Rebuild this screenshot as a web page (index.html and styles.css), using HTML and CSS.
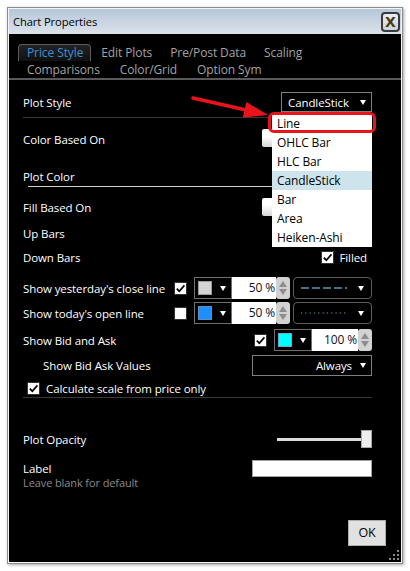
FILE: index.html
```html
<!DOCTYPE html>
<html>
<head>
<meta charset="utf-8">
<link rel="stylesheet" href="styles.css">
</head>
<body>
<div class="window">
  <div class="titlebar">
    <span class="title">Chart Properties</span>
    <span class="close">X</span>
  </div>
  <div class="content">
    <div class="tabs">
      <div class="tabrow">
        <span class="tab active">Price Style</span>
        <span class="tab">Edit Plots</span>
        <span class="tab">Pre/Post Data</span>
        <span class="tab">Scaling</span>
      </div>
      <div class="tabrow">
        <span class="tab">Comparisons</span>
        <span class="tab">Color/Grid</span>
        <span class="tab">Option Sym</span>
      </div>
    </div>

    <div class="form">
      <div class="row r-plotstyle">
        <span class="lbl">Plot Style</span>
        <div class="combo combo-style"><span>CandleStick</span><span class="tri"></span></div>
      </div>
      <div class="sep sep-dark"></div>

      <div class="row r-colorbased">
        <span class="lbl">Color Based On</span>
        <div class="btn-hidden"></div>
      </div>

      <div class="row r-plotcolor">
        <span class="lbl">Plot Color</span>
      </div>
      <div class="sep sep-light"></div>

      <div class="row r-fill">
        <span class="lbl">Fill Based On</span>
        <div class="btn-hidden"></div>
      </div>

      <div class="row r-up">
        <span class="lbl">Up Bars</span>
      </div>

      <div class="row r-down">
        <span class="lbl">Down Bars</span>
        <div class="right filled">
          <span class="chk"><svg width="11" height="11" viewBox="0 0 11 11"><path d="M1.8 5.6 L4.3 8.2 L9.4 2.4" fill="none" stroke="#000" stroke-width="1.7"/></svg></span>
          <span class="filled-txt">Filled</span>
        </div>
      </div>

      <div class="row r-yest">
        <span class="lbl">Show yesterday's close line</span>
        <div class="right group">
          <span class="chk"><svg width="11" height="11" viewBox="0 0 11 11"><path d="M1.8 5.6 L4.3 8.2 L9.4 2.4" fill="none" stroke="#000" stroke-width="1.7"/></svg></span>
          <div class="swatchbox"><span class="swatch sw-gray"></span><span class="tri"></span></div>
          <div class="numbox">50 %</div>
          <div class="spin"><span class="up"></span><span class="dn"></span></div>
          <div class="linecombo">
            <svg width="46" height="4" viewBox="0 0 46 4"><path d="M0 2 H8 M11 2 H19 M22 2 H30 M33 2 H41 M44 2 H46" stroke="#5b97ad" stroke-width="1.3"/></svg>
            <span class="tri"></span>
          </div>
        </div>
      </div>

      <div class="row r-today">
        <span class="lbl">Show today's open line</span>
        <div class="right group">
          <span class="chk"></span>
          <div class="swatchbox"><span class="swatch sw-blue"></span><span class="tri"></span></div>
          <div class="numbox">50 %</div>
          <div class="spin"><span class="up"></span><span class="dn"></span></div>
          <div class="linecombo">
            <svg width="46" height="4" viewBox="0 0 46 4"><path d="M0 2 H46" stroke="#5b97ad" stroke-width="1.2" stroke-dasharray="1.3 3"/></svg>
            <span class="tri"></span>
          </div>
        </div>
      </div>

      <div class="row r-bid">
        <span class="lbl">Show Bid and Ask</span>
        <div class="right group">
          <span class="chk"><svg width="11" height="11" viewBox="0 0 11 11"><path d="M1.8 5.6 L4.3 8.2 L9.4 2.4" fill="none" stroke="#000" stroke-width="1.7"/></svg></span>
          <div class="swatchbox"><span class="swatch sw-cyan"></span><span class="tri"></span></div>
          <div class="numbox">100 %</div>
          <div class="spin"><span class="up"></span><span class="dn"></span></div>
        </div>
      </div>

      <div class="row r-values">
        <span class="lbl indent">Show Bid Ask Values</span>
        <div class="combo combo-always"><span>Always</span><span class="tri"></span></div>
      </div>

      <div class="row r-calc">
        <span class="chk"><svg width="11" height="11" viewBox="0 0 11 11"><path d="M1.8 5.6 L4.3 8.2 L9.4 2.4" fill="none" stroke="#000" stroke-width="1.7"/></svg></span>
        <span class="lbl calc-lbl">Calculate scale from price only</span>
      </div>
      <div class="sep sep-dark"></div>

      <div class="row r-opacity">
        <span class="lbl">Plot Opacity</span>
        <div class="slider"><span class="track"></span><span class="thumb"></span></div>
      </div>

      <div class="row r-label">
        <span class="lbl">Label</span>
        <div class="input"></div>
      </div>
      <div class="hint">Leave blank for default</div>
    </div>

    <div class="footer">
      <div class="ok">OK</div>
    </div>

    <svg class="grip" width="10" height="10" viewBox="0 0 10 10">
      <rect x="8" y="0" width="2" height="2" fill="#8a8a8a"/>
      <rect x="4" y="4" width="2" height="2" fill="#8a8a8a"/>
      <rect x="8" y="4" width="2" height="2" fill="#8a8a8a"/>
      <rect x="0" y="8" width="2" height="2" fill="#8a8a8a"/>
      <rect x="4" y="8" width="2" height="2" fill="#8a8a8a"/>
      <rect x="8" y="8" width="2" height="2" fill="#8a8a8a"/>
    </svg>

    <ul class="droplist">
      <li>Line</li>
      <li>OHLC Bar</li>
      <li>HLC Bar</li>
      <li class="hl">CandleStick</li>
      <li>Bar</li>
      <li>Area</li>
      <li>Heiken-Ashi</li>
    </ul>
    <div class="redbox"></div>
    <svg class="arrow" width="90" height="30" viewBox="0 0 90 30">
      <path d="M4 4 L56 15.7" stroke="#e8141c" stroke-width="3.6" stroke-linecap="round"/>
      <polygon points="79,21 57.4,7.9 53.8,23.5" fill="#e8141c"/>
    </svg>
  </div>
</div>
</body>
</html>
```
FILE: styles.css
```css
* { box-sizing: border-box; }
html, body { margin: 0; padding: 0; background: #fff; }
body {
  font-family: "Open Sans", "Noto Sans", sans-serif;
  font-size: 11.5px;
  letter-spacing: -0.1px;
  width: 410px;
  height: 571px;
  overflow: hidden;
}
.window {
  margin: 7px 0 0 7px;
  width: 396px;
  border: 1px solid #8c8c8c;
  padding: 1px;
  background: #f4f4f4;
  box-shadow: 1px 1px 3px rgba(0,0,0,0.35);
}
.titlebar {
  height: 25px;
  background: linear-gradient(#b6c7d9, #dbe2ea);
  display: flex;
  align-items: center;
  justify-content: space-between;
  padding: 0 1px 0 4px;
}
.title { color: #000; font-size: 11.2px; }
.close {
  width: 19px;
  height: 20px;
  border: 2px solid #3a3a3a;
  border-radius: 4px;
  background: linear-gradient(#e9eef3, #c9d3dc);
  font-family: "DejaVu Sans", sans-serif;
  font-weight: bold;
  font-size: 14px;
  line-height: 16px;
  text-align: center;
  color: #4a3b0c;
  margin-top: 1px;
  letter-spacing: 0;
}
.content {
  position: relative;
  height: 528px;
  background: #000;
  color: #fff;
}
.tabs {
  padding: 10px 0 0 9px;
  border-bottom: 2px solid #5a5a5a;
}
.tabrow {
  display: flex;
  height: 17px;
  gap: 1px;
}
.tab {
  display: block;
  height: 17px;
  padding: 0 7px 0 8px;
  border: 1px solid transparent;
  border-bottom: none;
  font-size: 12px;
  line-height: 15px;
  color: #a3a3a3;
  white-space: nowrap;
}
.tab.active {
  color: #3c8fd3;
  border-color: #5c5c5c;
  border-radius: 4px 4px 0 0;
  background: linear-gradient(#222, #111);
}
.tabrow + .tabrow { gap: 3px; }
.form {
  padding: 0 29px 0 14px;
}
.row {
  display: flex;
  align-items: center;
  height: 20px;
  position: relative;
}
.lbl { white-space: nowrap; }
.indent { margin-left: 20px; }
.right { margin-left: auto; display: flex; align-items: center; }
.sep { height: 1px; }
.sep-dark { background: #383838; }
.sep-light { background: #cfcfcf; margin-left: 5px; }

.r-plotstyle { margin-top: 12px; }
.r-plotstyle + .sep { margin-top: 5px; }
.r-colorbased { margin-top: 11px; }
.r-plotcolor { margin-top: 17px; }
.r-fill { margin-top: 10px; }
.r-up { margin-top: 6px; }
.r-down { margin-top: 4px; }
.r-yest { margin-top: 10px; height: 22px; }
.r-today { margin-top: 3px; height: 22px; }
.r-bid { margin-top: 5px; height: 22px; }
.r-values { margin-top: 3px; height: 22px; }
.r-calc { margin-top: 3px; height: 18px; padding-left: 4px; }
.r-calc + .sep { margin-top: 0; }
.r-opacity { margin-top: 31px; }
.r-label { margin-top: 10px; height: 18px; }

.combo {
  margin-left: auto;
  display: flex;
  align-items: center;
  border: 1px solid #7f7f7f;
  background: #000;
  color: #fff;
}
.combo-style {
  width: 91px;
  height: 20px;
  padding: 0 3px 0 6px;
  justify-content: space-between;
}
.combo-always {
  width: 120px;
  height: 21px;
  padding: 0 3px 0 6px;
  justify-content: flex-end;
  gap: 8px;
}
.tri {
  display: inline-block;
  width: 0;
  height: 0;
  border-left: 3.5px solid transparent;
  border-right: 3.5px solid transparent;
  border-top: 5px solid #fff;
  margin-right: 2px;
}
.btn-hidden {
  margin-left: auto;
  width: 110px;
  height: 18px;
  background: linear-gradient(#ffffff 40%, #d6d6d6);
  border-radius: 2px 0 0 2px;
}
.r-colorbased .btn-hidden { margin-top: -2px; }

.chk {
  width: 13px;
  height: 13px;
  background: #fff;
  border: 1px solid #333;
  display: inline-flex;
  align-items: center;
  justify-content: center;
  flex: none;
}
.filled { gap: 5px; margin-right: 5px; }
.group { height: 22px; }
.group .chk { margin-right: 7px; }
.swatchbox {
  width: 38px;
  height: 22px;
  border: 1px solid #707070;
  display: flex;
  align-items: center;
  padding-left: 3px;
  gap: 8px;
}
.swatch {
  width: 14px;
  height: 14px;
  border: 1px solid #9a9a9a;
}
.sw-gray { background: #d3d3d3; }
.sw-blue { background: #1e8fff; border-color: #5a8fc0; }
.sw-cyan { background: #00ffff; border-color: #6ac; }
.numbox {
  width: 44px;
  height: 22px;
  background: #fff;
  color: #101020;
  text-align: right;
  line-height: 22px;
  padding-right: 1px;
  font-size: 12px;
}
.r-bid .numbox { width: 46px; }
.spin {
  width: 14px;
  height: 22px;
  background: #d2d2d2;
  border-radius: 3px;
  display: flex;
  flex-direction: column;
  align-items: center;
  justify-content: space-around;
  padding: 3px 0;
}
.spin .up, .spin .dn {
  width: 0; height: 0;
  border-left: 4px solid transparent;
  border-right: 4px solid transparent;
}
.spin .up { border-bottom: 6px solid #8d8d8d; }
.spin .dn { border-top: 6px solid #8d8d8d; }
.linecombo {
  margin-left: 3px;
  width: 79px;
  height: 22px;
  border: 1px solid #5d5d5d;
  border-radius: 4px;
  display: flex;
  align-items: center;
  justify-content: space-between;
  padding: 0 5px 0 7px;
}
.calc-lbl { margin-left: 6px; }

.slider {
  margin-left: auto;
  width: 95px;
  height: 18px;
  display: flex;
  align-items: center;
  position: relative;
}
.slider .track {
  width: 86px;
  height: 3px;
  background: #dcdcdc;
}
.slider .thumb {
  position: absolute;
  right: 0;
  top: 0;
  width: 11px;
  height: 18px;
  background: #ededed;
  border: 1px solid #a8a8a8;
}
.input {
  margin-left: auto;
  width: 120px;
  height: 17px;
  background: #fff;
  border: 1px solid #a0a0a0;
}
.hint {
  color: #8a8a8a;
  font-size: 11px;
  height: 12px;
  line-height: 12px;
}
.footer {
  display: flex;
  justify-content: flex-end;
  padding: 31px 15px 0 0;
}
.ok {
  width: 38px;
  height: 26px;
  background: #e1e1e1;
  border: 1px solid #adadad;
  color: #000;
  font-size: 12.5px;
  line-height: 24px;
  text-align: center;
}
.grip {
  position: absolute;
  right: 2px;
  bottom: 2px;
}
.droplist {
  position: absolute;
  left: 263px;
  top: 80px;
  width: 100px;
  margin: 0;
  padding: 0;
  list-style: none;
  background: #fff;
  color: #000;
  font-size: 12px;
}
.droplist li {
  height: 19px;
  line-height: 19px;
  padding-left: 5px;
}
.droplist li.hl { background: #cde4ed; }
.redbox {
  position: absolute;
  left: 259px;
  top: 78px;
  width: 108px;
  height: 21px;
  border: 3px solid #e8141c;
  border-radius: 6px;
}
.arrow {
  position: absolute;
  left: 180px;
  top: 60px;
}
```
